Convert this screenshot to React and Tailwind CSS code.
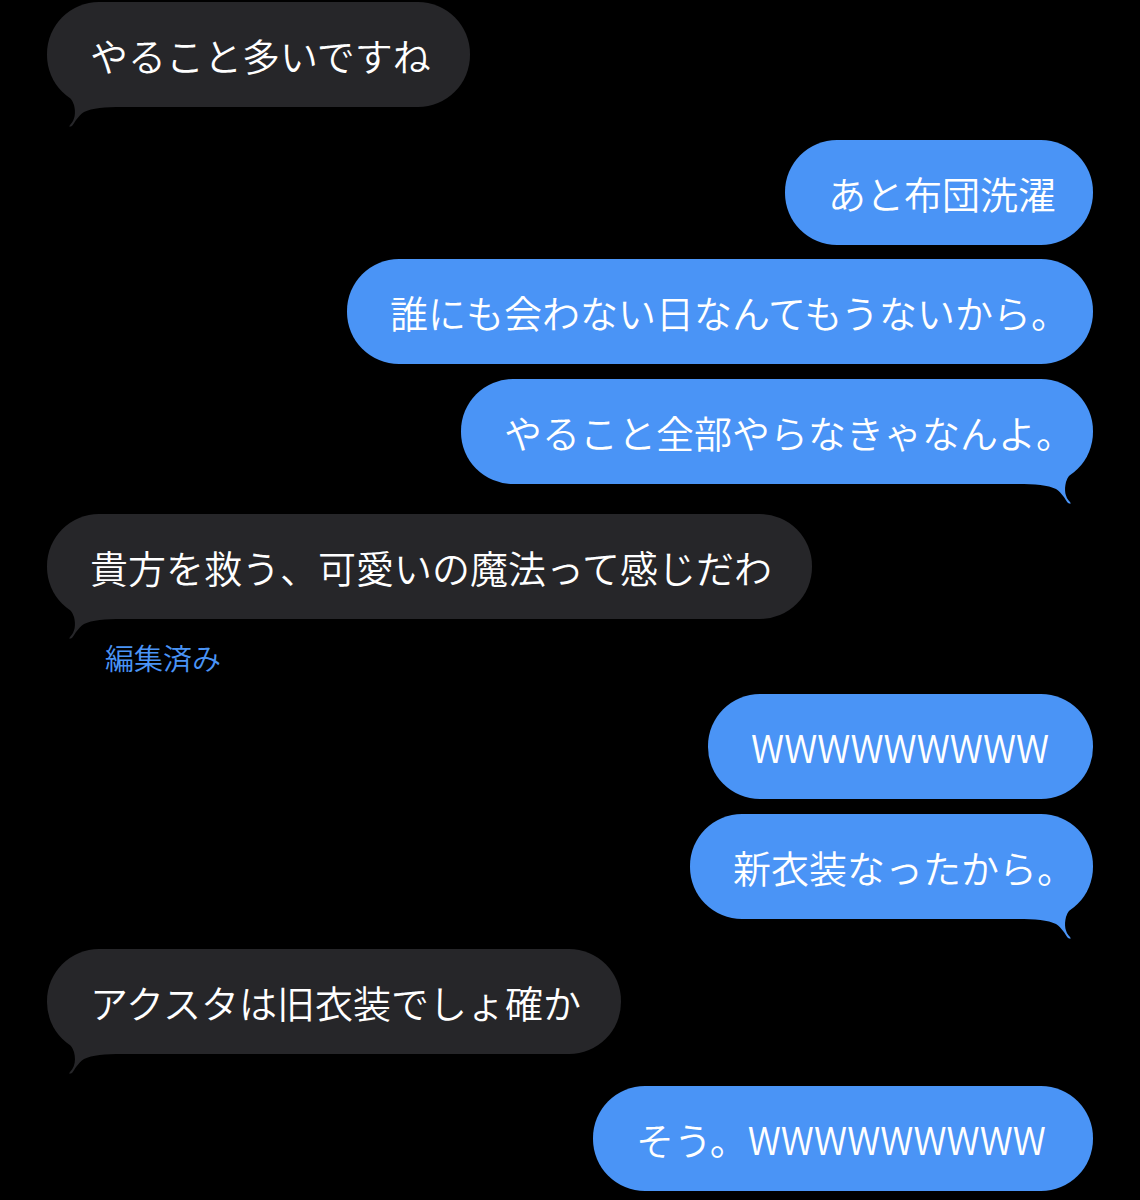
import React from "react";

const TAIL = "M6 0 L6 12 C14 22 24 28 27 38 C29 46 28 53 23 58 Q21 61 25 59 C28 55 31 49 37 45 C45 41 58 40 75 40 L75 0 Z";

function Tail({ side, fill }) {
  if (side === "left") {
    return (
      <svg className="absolute left-0 bottom-[-22px]" width="75" height="62" viewBox="0 0 75 62">
        <path d={TAIL} fill={fill} />
      </svg>
    );
  }
  return (
    <svg className="absolute right-0 bottom-[-22px] -scale-x-100" width="75" height="62" viewBox="0 0 75 62">
      <path d={TAIL} fill={fill} />
    </svg>
  );
}

function Received({ w, tail, children, mt }) {
  return (
    <div className={`relative self-start ${mt} ${w} h-[105px] rounded-[52px] bg-[#262629] flex items-center pl-[43px] whitespace-nowrap`}>
      {tail && <Tail side="left" fill="#262629" />}
      <span className="relative">{children}</span>
    </div>
  );
}

function Sent({ w, tail, children, mt }) {
  return (
    <div className={`relative self-end ${mt} ${w} h-[105px] rounded-[52px] bg-[#4a94f6] flex items-center pl-[43px] whitespace-nowrap`}>
      {tail && <Tail side="right" fill="#4a94f6" />}
      <span className="relative">{children}</span>
    </div>
  );
}

export default function App() {
  return (
    <div className="w-[1140px] h-[1200px] bg-black overflow-hidden font-['Noto_Sans_CJK_JP','Noto_Sans',sans-serif] font-[350] text-white text-[38px] leading-[45px]">
      <div className="flex flex-col px-[47px] pt-[2px]">
        <Received w="w-[423px]" tail mt="mt-0">やること多いですね</Received>
        <Sent w="w-[308px]" mt="mt-[33px]">あと布団洗濯</Sent>
        <Sent w="w-[746px]" mt="mt-[14px]">誰にも会わない日なんてもうないから。</Sent>
        <Sent w="w-[632px]" tail mt="mt-[15px]">やること全部やらなきゃなんよ。</Sent>
        <Received w="w-[765px]" tail mt="mt-[30px]">貴方を救う、可愛いの魔法って感じだわ</Received>
        <div className="self-start ml-[58px] mt-[21px] mb-[19px] text-[29px] leading-[35px] text-[#4a94f6]">編集済み</div>
        <Sent w="w-[385px]" mt="mt-0">WWWWWWWWW</Sent>
        <Sent w="w-[403px]" tail mt="mt-[15px]">新衣装なったから。</Sent>
        <Received w="w-[574px]" tail mt="mt-[30px]">アクスタは旧衣装でしょ確か</Received>
        <Sent w="w-[500px]" mt="mt-[32px]">そう。WWWWWWWWW</Sent>
      </div>
    </div>
  );
}
